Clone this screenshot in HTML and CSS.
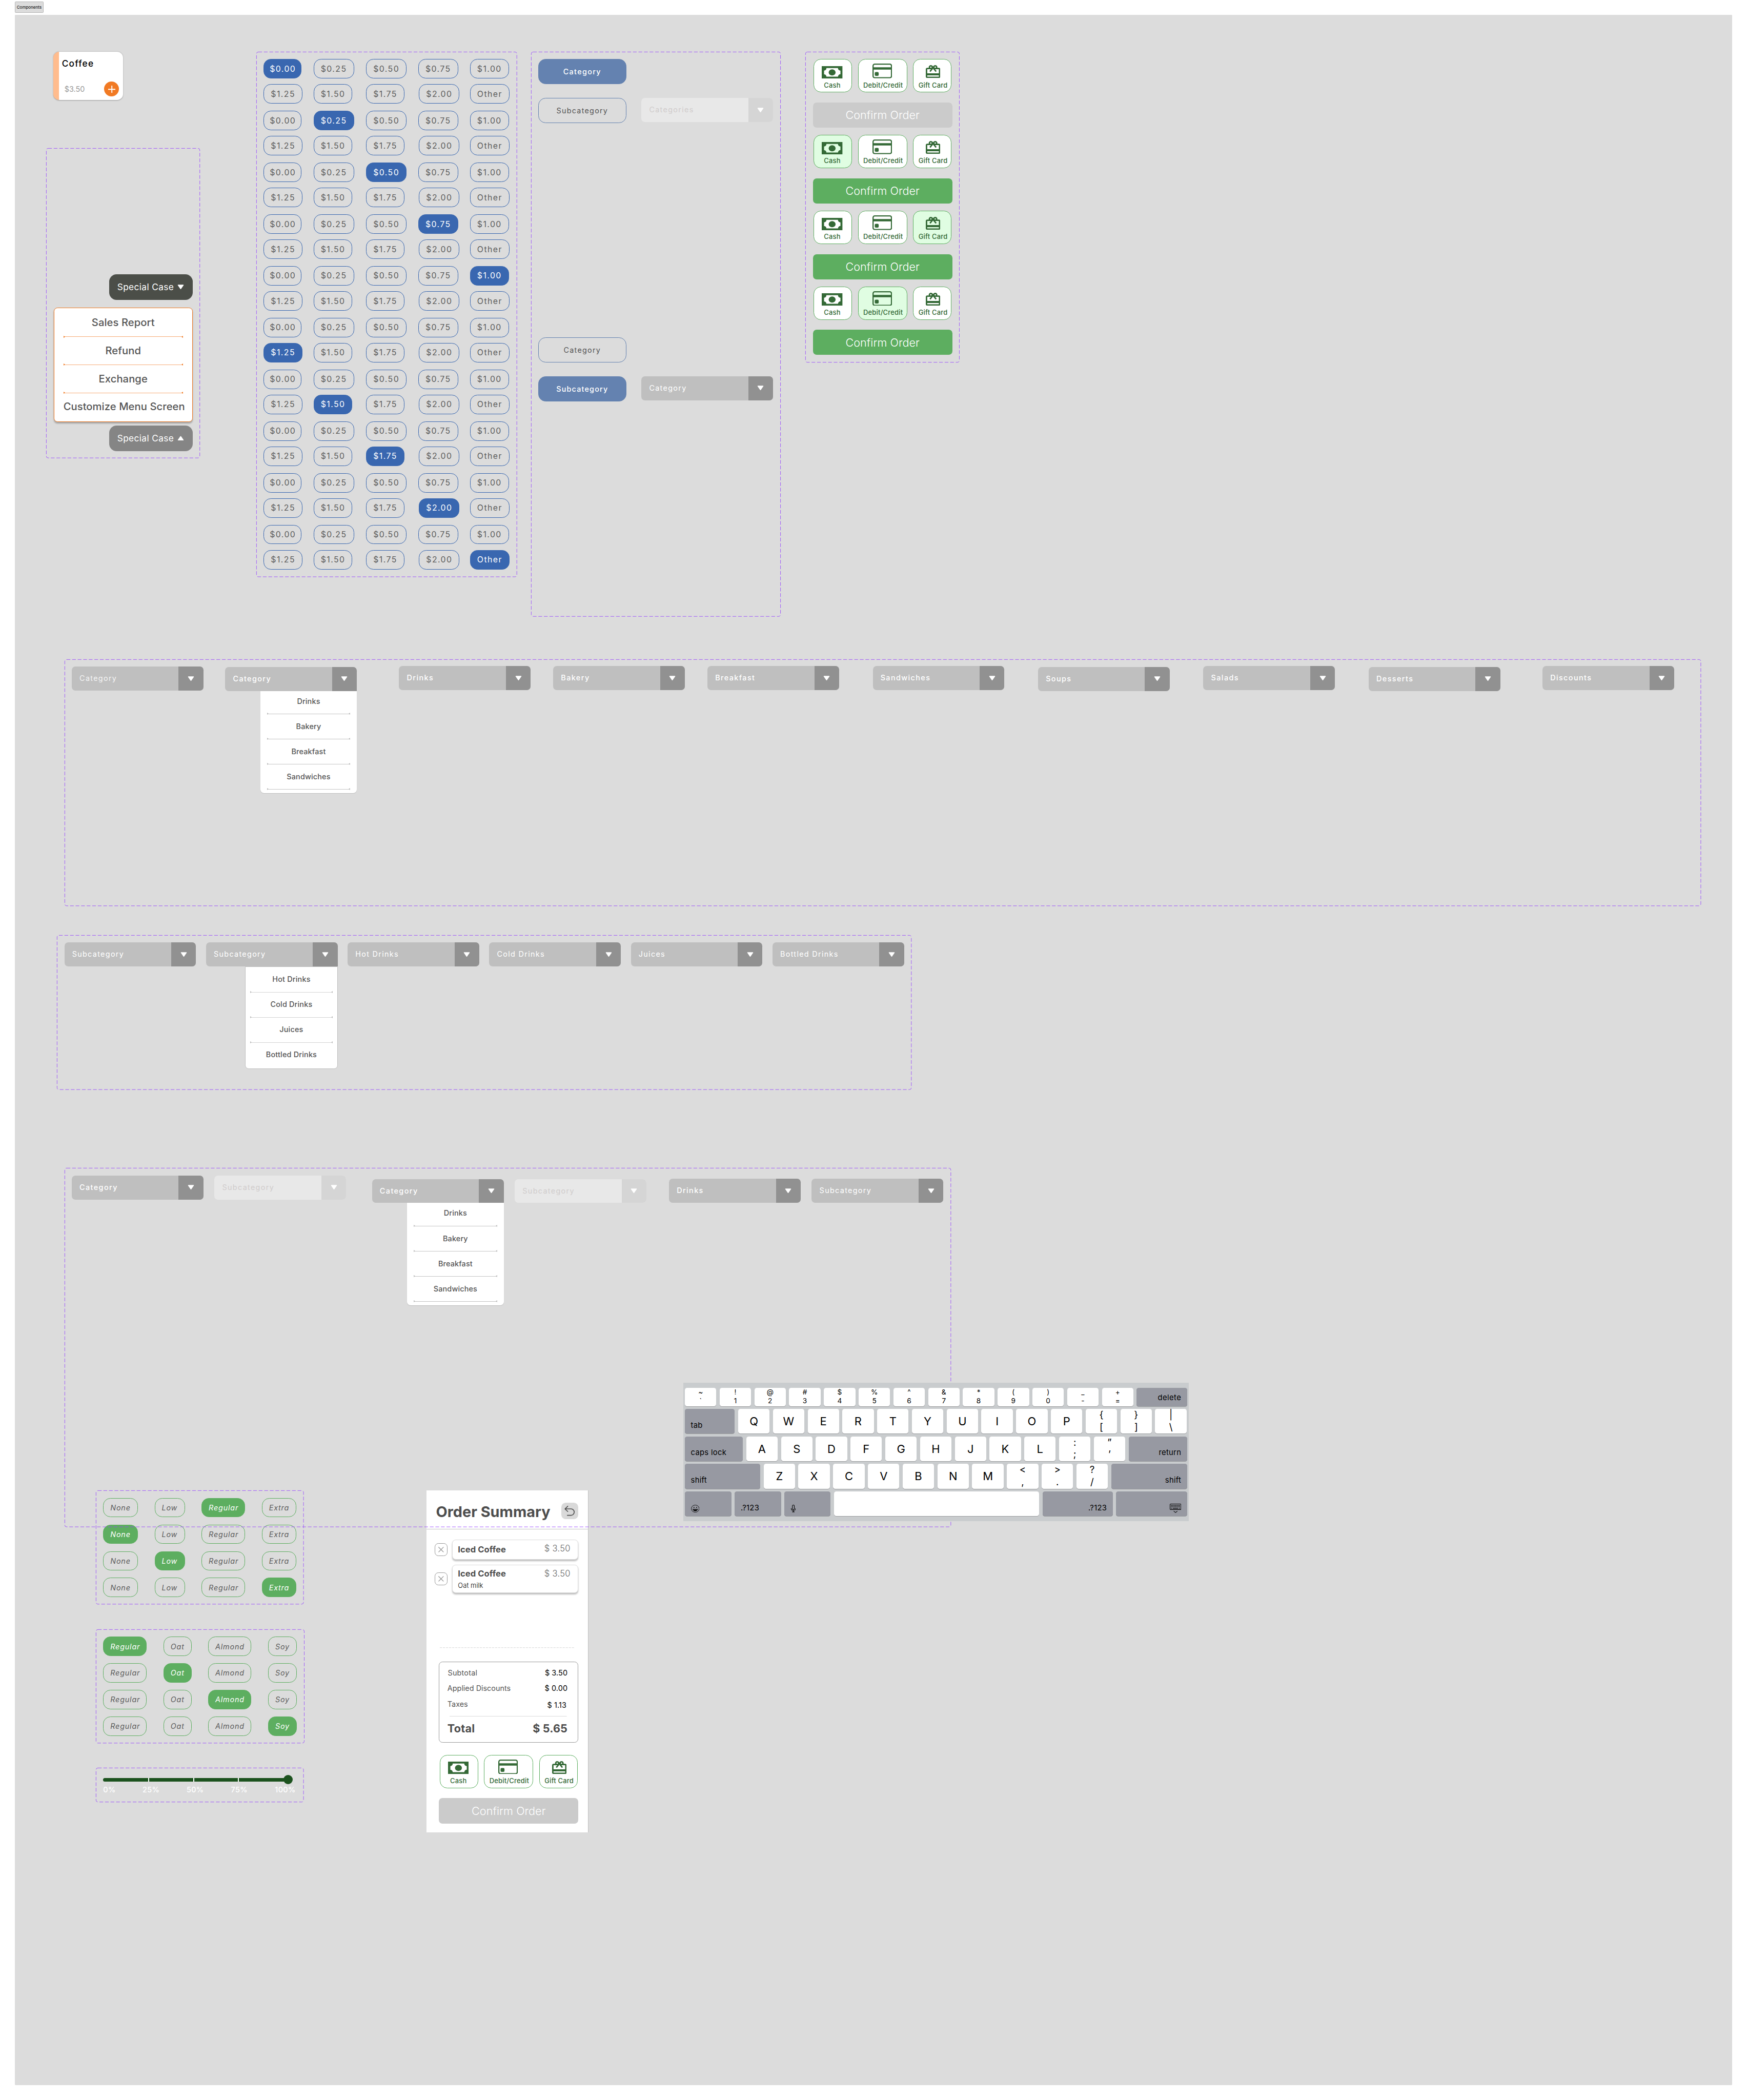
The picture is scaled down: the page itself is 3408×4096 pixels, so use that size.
FILE: index.html
```html
<!DOCTYPE html>
<html lang="en">
<head>
<meta charset="utf-8">
<title>Components</title>
<link rel="stylesheet" href="styles.css">
</head>
<body>
<svg class="defs" aria-hidden="true">
  <symbol id="tri" viewBox="0 0 18 13"><path d="M2 1.5H16L9 11.5Z" fill="currentColor" stroke="currentColor" stroke-width="2" stroke-linejoin="round"/></symbol>
  <symbol id="cash" viewBox="0 0 169 101" preserveAspectRatio="none"><path fill="currentColor" fill-rule="evenodd" d="M0 0H169V101H0ZM38 16A19 19 0 0 1 19 36V66A19 19 0 0 1 38 85H132A19 19 0 0 1 152 66V36A19 19 0 0 1 132 16Z"/><ellipse cx="84.500" cy="50.500" rx="28" ry="25" fill="currentColor"/></symbol>
  <symbol id="credit" viewBox="0 0 53 40"><rect x="1.600" y="1.600" width="49.800" height="36.800" rx="4.500" fill="none" stroke="currentColor" stroke-width="3.200"/><path d="M1 10H52V16.400H1Z" fill="currentColor"/><rect x="6.200" y="23" width="10.600" height="10.400" rx="3" fill="currentColor"/></symbol>
  <symbol id="gift" viewBox="2 2 20 19" preserveAspectRatio="none"><path fill="currentColor" d="M20 6h-2.180c.11-.31.18-.65.18-1 0-1.660-1.340-3-3-3-1.050 0-1.960.54-2.500 1.350l-.5.67-.5-.68C10.960 2.540 10.050 2 9 2 7.340 2 6 3.340 6 5c0 .35.07.69.18 1H4c-1.110 0-1.990.89-1.990 2L2 19c0 1.110.89 2 2 2h16c1.110 0 2-.89 2-2V8c0-1.110-.89-2-2-2zm-5-2c.55 0 1 .45 1 1s-.45 1-1 1-1-.45-1-1 .45-1 1-1zM9 4c.55 0 1 .45 1 1s-.45 1-1 1-1-.45-1-1 .45-1 1-1zm11 15H4v-2h16v2zm0-5H4V8h5.080L7 10.830 8.620 12 11 8.760l1-1.360 1 1.360L15.380 12 17 10.830 14.920 8H20v6z"/></symbol>
  <symbol id="cross" viewBox="0 0 14 14"><path d="M.5 .5L13.500 13.500M13.500 .5L.5 13.500" stroke="currentColor" stroke-width="1.700" fill="none"/></symbol>
  <symbol id="undo" viewBox="0 0 45 45"><path d="M17.500 9.500L10 16.700L17.500 23.900M10.500 16.700H26.200A8.700 8.700 0 0 1 26.200 34.100H16.200" fill="none" stroke="currentColor" stroke-width="2.300" stroke-linecap="round" stroke-linejoin="round"/></symbol>
</svg>

<main class="board">
  <div class="tag">Components</div>
  <section class="canvas">

    <article class="product at-product">
      <div class="product-body">
        <h3>Coffee</h3>
        <div class="product-foot"><span>$3.50</span>
          <button class="add"><svg viewBox="0 0 20 20"><path d="M10 0V20M0 10H20" stroke="#fff" stroke-width="2.600"/></svg></button></div>
      </div>
    </article>

    <div class="set at-special">
      <div class="special">
        <div class="special-btn dark">Special Case<svg><use href="#tri"/></svg></div>
        <ul class="special-menu">
          <li>Sales Report</li><li class="rule"></li><li>Refund</li><li class="rule"></li><li>Exchange</li><li class="rule"></li><li>Customize Menu Screen</li>
        </ul>
        <div class="special-btn">Special Case<svg class="up"><use href="#tri"/></svg></div>
      </div>
      <svg class="outline"><rect/></svg>
    </div>

    <div class="set at-prices">
      <div class="prices-stack">
        <ul class="prices"><li class="on">$0.00</li><li>$0.25</li><li>$0.50</li><li>$0.75</li><li>$1.00</li><li>$1.25</li><li>$1.50</li><li>$1.75</li><li>$2.00</li><li>Other</li></ul>
        <ul class="prices"><li>$0.00</li><li class="on">$0.25</li><li>$0.50</li><li>$0.75</li><li>$1.00</li><li>$1.25</li><li>$1.50</li><li>$1.75</li><li>$2.00</li><li>Other</li></ul>
        <ul class="prices"><li>$0.00</li><li>$0.25</li><li class="on">$0.50</li><li>$0.75</li><li>$1.00</li><li>$1.25</li><li>$1.50</li><li>$1.75</li><li>$2.00</li><li>Other</li></ul>
        <ul class="prices"><li>$0.00</li><li>$0.25</li><li>$0.50</li><li class="on">$0.75</li><li>$1.00</li><li>$1.25</li><li>$1.50</li><li>$1.75</li><li>$2.00</li><li>Other</li></ul>
        <ul class="prices"><li>$0.00</li><li>$0.25</li><li>$0.50</li><li>$0.75</li><li class="on">$1.00</li><li>$1.25</li><li>$1.50</li><li>$1.75</li><li>$2.00</li><li>Other</li></ul>
        <ul class="prices"><li>$0.00</li><li>$0.25</li><li>$0.50</li><li>$0.75</li><li>$1.00</li><li class="on">$1.25</li><li>$1.50</li><li>$1.75</li><li>$2.00</li><li>Other</li></ul>
        <ul class="prices"><li>$0.00</li><li>$0.25</li><li>$0.50</li><li>$0.75</li><li>$1.00</li><li>$1.25</li><li class="on">$1.50</li><li>$1.75</li><li>$2.00</li><li>Other</li></ul>
        <ul class="prices"><li>$0.00</li><li>$0.25</li><li>$0.50</li><li>$0.75</li><li>$1.00</li><li>$1.25</li><li>$1.50</li><li class="on">$1.75</li><li>$2.00</li><li>Other</li></ul>
        <ul class="prices"><li>$0.00</li><li>$0.25</li><li>$0.50</li><li>$0.75</li><li>$1.00</li><li>$1.25</li><li>$1.50</li><li>$1.75</li><li class="on">$2.00</li><li>Other</li></ul>
        <ul class="prices"><li>$0.00</li><li>$0.25</li><li>$0.50</li><li>$0.75</li><li>$1.00</li><li>$1.25</li><li>$1.50</li><li>$1.75</li><li>$2.00</li><li class="on">Other</li></ul>
      </div>
      <svg class="outline"><rect/></svg>
    </div>

    <div class="set at-tabs">
      <div class="tabs">
        <div class="tab on">Category</div><span></span>
        <div class="tab">Subcategory</div>
        <div class="drop off"><span>Categories</span><i><svg><use href="#tri"/></svg></i></div>
      </div>
      <div class="tabs">
        <div class="tab">Category</div><span></span>
        <div class="tab on sub">Subcategory</div>
        <div class="drop"><span>Category</span><i><svg><use href="#tri"/></svg></i></div>
      </div>
      <svg class="outline"><rect/></svg>
    </div>

    <div class="set at-pay">
      <div class="pay-stack">
        <div class="pay">
          <div class="tiles"><div class="tile cash"><svg><use href="#cash"/></svg><span>Cash</span></div><div class="tile credit"><svg><use href="#credit"/></svg><span>Debit/Credit</span></div><div class="tile gift"><svg><use href="#gift"/></svg><span>Gift Card</span></div></div>
          <div class="confirm">Confirm Order</div>
        </div>
        <div class="pay">
          <div class="tiles"><div class="tile cash on"><svg><use href="#cash"/></svg><span>Cash</span></div><div class="tile credit"><svg><use href="#credit"/></svg><span>Debit/Credit</span></div><div class="tile gift"><svg><use href="#gift"/></svg><span>Gift Card</span></div></div>
          <div class="confirm ready">Confirm Order</div>
        </div>
        <div class="pay">
          <div class="tiles"><div class="tile cash"><svg><use href="#cash"/></svg><span>Cash</span></div><div class="tile credit"><svg><use href="#credit"/></svg><span>Debit/Credit</span></div><div class="tile gift on"><svg><use href="#gift"/></svg><span>Gift Card</span></div></div>
          <div class="confirm ready">Confirm Order</div>
        </div>
        <div class="pay">
          <div class="tiles"><div class="tile cash"><svg><use href="#cash"/></svg><span>Cash</span></div><div class="tile credit on"><svg><use href="#credit"/></svg><span>Debit/Credit</span></div><div class="tile gift"><svg><use href="#gift"/></svg><span>Gift Card</span></div></div>
          <div class="confirm ready">Confirm Order</div>
        </div>
      </div>
      <svg class="outline"><rect/></svg>
    </div>

    <div class="set at-categories">
      <div class="drop v1"><span class="dim">Category</span><i><svg><use href="#tri"/></svg></i></div>
      <div class="drop open v2"><span class="med">Category</span><i><svg><use href="#tri"/></svg></i>
        <ul class="menu"><li>Drinks</li><li class="rule"></li><li>Bakery</li><li class="rule"></li><li>Breakfast</li><li class="rule"></li><li>Sandwiches</li><li class="rule"></li></ul></div>
      <div class="drop v3"><span class="med">Drinks</span><i><svg><use href="#tri"/></svg></i></div>
      <div class="drop v4"><span class="med">Bakery</span><i><svg><use href="#tri"/></svg></i></div>
      <div class="drop v5"><span class="med">Breakfast</span><i><svg><use href="#tri"/></svg></i></div>
      <div class="drop v6"><span class="med">Sandwiches</span><i><svg><use href="#tri"/></svg></i></div>
      <div class="drop v7"><span class="med">Soups</span><i><svg><use href="#tri"/></svg></i></div>
      <div class="drop v8"><span class="med">Salads</span><i><svg><use href="#tri"/></svg></i></div>
      <div class="drop v9"><span class="med">Desserts</span><i><svg><use href="#tri"/></svg></i></div>
      <div class="drop v10"><span class="med">Discounts</span><i><svg><use href="#tri"/></svg></i></div>
      <svg class="outline"><rect/></svg>
    </div>

    <div class="set at-subcategories">
      <div class="drop-row">
        <div class="drop"><span>Subcategory</span><i><svg><use href="#tri"/></svg></i></div>
        <div class="drop open"><span>Subcategory</span><i><svg><use href="#tri"/></svg></i>
          <ul class="menu narrow"><li>Hot Drinks</li><li class="rule"></li><li>Cold Drinks</li><li class="rule"></li><li>Juices</li><li class="rule"></li><li>Bottled Drinks</li></ul></div>
        <div class="drop"><span>Hot Drinks</span><i><svg><use href="#tri"/></svg></i></div>
        <div class="drop"><span>Cold Drinks</span><i><svg><use href="#tri"/></svg></i></div>
        <div class="drop"><span>Juices</span><i><svg><use href="#tri"/></svg></i></div>
        <div class="drop"><span>Bottled Drinks</span><i><svg><use href="#tri"/></svg></i></div>
      </div>
      <svg class="outline"><rect/></svg>
    </div>

    <div class="set at-ice">
      <ul class="options ice">
        <li>None</li><li>Low</li><li class="on">Regular</li><li>Extra</li>
        <li class="on">None</li><li>Low</li><li>Regular</li><li>Extra</li>
        <li>None</li><li class="on">Low</li><li>Regular</li><li>Extra</li>
        <li>None</li><li>Low</li><li>Regular</li><li class="on">Extra</li>
      </ul>
      <svg class="outline"><rect/></svg>
    </div>

    <div class="set at-milk">
      <ul class="options milk">
        <li class="on">Regular</li><li>Oat</li><li>Almond</li><li>Soy</li>
        <li>Regular</li><li class="on">Oat</li><li>Almond</li><li>Soy</li>
        <li>Regular</li><li>Oat</li><li class="on">Almond</li><li>Soy</li>
        <li>Regular</li><li>Oat</li><li>Almond</li><li class="on">Soy</li>
      </ul>
      <svg class="outline"><rect/></svg>
    </div>

    <div class="set at-slider">
      <div class="slider">
        <div class="track"><i></i><i></i><i></i><i></i><b class="knob"></b></div>
        <div class="marks"><span>0%</span><span>25%</span><span>50%</span><span>75%</span><span>100%</span></div>
      </div>
      <svg class="outline"><rect/></svg>
    </div>

    <article class="order at-order">
      <header><h2>Order Summary</h2><button class="undo"><svg><use href="#undo"/></svg></button></header>
      <div class="items">
        <div class="item-row"><button class="remove"><svg><use href="#cross"/></svg></button>
          <div class="item single"><div><strong>Iced Coffee</strong></div><span>$ 3.50</span></div></div>
        <div class="item-row"><button class="remove"><svg><use href="#cross"/></svg></button>
          <div class="item"><div><strong>Iced Coffee</strong><small>Oat milk</small></div><span>$ 3.50</span></div></div>
      </div>
      <svg class="perforation"><path d="M0 1H364"/></svg>
      <dl class="totals">
        <div><dt class="first">Subtotal</dt><dd>$ 3.50</dd></div>
        <div><dt>Applied Discounts</dt><dd>$ 0.00</dd></div>
        <div class="tax"><dt>Taxes</dt><dd>$ 1.13</dd></div>
        <div class="grand"><dt>Total</dt><dd>$ 5.65</dd></div>
      </dl>
      <div class="pay">
        <div class="tiles"><div class="tile cash"><svg><use href="#cash"/></svg><span>Cash</span></div><div class="tile credit"><svg><use href="#credit"/></svg><span>Debit/Credit</span></div><div class="tile gift"><svg><use href="#gift"/></svg><span>Gift Card</span></div></div>
        <div class="confirm">Confirm Order</div>
      </div>
    </article>

    <div class="set at-filters">
      <div class="pair p1">
        <div class="drop"><span class="med">Category</span><i><svg><use href="#tri"/></svg></i></div>
        <div class="drop off"><span>Subcategory</span><i><svg><use href="#tri"/></svg></i></div>
      </div>
      <div class="pair p2">
        <div class="drop open"><span class="med">Category</span><i><svg><use href="#tri"/></svg></i>
          <ul class="menu"><li>Drinks</li><li class="rule"></li><li>Bakery</li><li class="rule"></li><li>Breakfast</li><li class="rule"></li><li>Sandwiches</li><li class="rule"></li></ul></div>
        <div class="drop off"><span>Subcategory</span><i><svg><use href="#tri"/></svg></i></div>
      </div>
      <div class="pair p3">
        <div class="drop"><span class="med">Drinks</span><i><svg><use href="#tri"/></svg></i></div>
        <div class="drop"><span>Subcategory</span><i><svg><use href="#tri"/></svg></i></div>
      </div>
      <svg class="outline"><rect/></svg>
    </div>

    <div class="keyboard at-keyboard">
      <div class="keys nums">
        <div class="key two"><span>~</span><span>`</span></div><div class="key two"><span>!</span><span>1</span></div><div class="key two"><span>@</span><span>2</span></div><div class="key two"><span>#</span><span>3</span></div><div class="key two"><span>$</span><span>4</span></div><div class="key two"><span>%</span><span>5</span></div><div class="key two"><span>^</span><span>6</span></div><div class="key two"><span>&amp;</span><span>7</span></div><div class="key two"><span>*</span><span>8</span></div><div class="key two"><span>(</span><span>9</span></div><div class="key two"><span>)</span><span>0</span></div><div class="key two"><span>_</span><span>-</span></div><div class="key two"><span>+</span><span>=</span></div>
        <div class="key mod right grow">delete</div>
      </div>
      <div class="keys">
        <div class="key mod k-tab">tab</div><div class="key">Q</div><div class="key">W</div><div class="key">E</div><div class="key">R</div><div class="key">T</div><div class="key">Y</div><div class="key">U</div><div class="key">I</div><div class="key">O</div><div class="key">P</div><div class="key two"><span>{</span><span>[</span></div><div class="key two"><span>}</span><span>]</span></div><div class="key two"><span>|</span><span>\</span></div>
      </div>
      <div class="keys">
        <div class="key mod k-caps">caps lock</div><div class="key">A</div><div class="key">S</div><div class="key">D</div><div class="key">F</div><div class="key">G</div><div class="key">H</div><div class="key">J</div><div class="key">K</div><div class="key">L</div><div class="key two"><span>:</span><span>;</span></div><div class="key two"><span>”</span><span>’</span></div>
        <div class="key mod right grow">return</div>
      </div>
      <div class="keys">
        <div class="key mod k-shift">shift</div><div class="key">Z</div><div class="key">X</div><div class="key">C</div><div class="key">V</div><div class="key">B</div><div class="key">N</div><div class="key">M</div><div class="key two"><span>&lt;</span><span>,</span></div><div class="key two"><span>&gt;</span><span>.</span></div><div class="key two"><span>?</span><span>/</span></div>
        <div class="key mod right grow">shift</div>
      </div>
      <div class="keys">
        <div class="key mod k-emoji"><svg width="23" height="21" viewBox="0 0 23 21"><ellipse cx="11.500" cy="10.500" rx="10.600" ry="9.700" fill="none" stroke="#000" stroke-width="1.200"/><circle cx="8" cy="7.200" r="1.300"/><circle cx="15" cy="7.200" r="1.300"/><path d="M4.500 11.200H18.500C18 15.500 15 17.300 11.500 17.300S5 15.500 4.500 11.200Z"/><path d="M6 12.600H17" stroke="#9799a2" stroke-width="1"/></svg></div>
        <div class="key mod k-sym">.?123</div>
        <div class="key mod k-mic"><svg width="13" height="20" viewBox="0 0 13 20"><rect x="3.900" y=".7" width="5.200" height="12.600" rx="2.600" fill="none" stroke="#000" stroke-width="1.500"/><path d="M.8 9.500V11A5.700 4.800 0 0 0 12.200 11V9.500M6.500 16V19M3.300 19.200H9.700" fill="none" stroke="#000" stroke-width="1.500"/></svg></div>
        <div class="key grow"></div>
        <div class="key mod right k-sym2">.?123</div>
        <div class="key mod right k-hide"><svg width="31" height="25" viewBox="0 0 31 25"><rect x=".8" y=".8" width="29.400" height="15" rx="1.500" fill="none" stroke="#000" stroke-width="1.500"/><path d="M3.500 4.700H27.500M3.500 8.300H27.500" stroke="#000" stroke-width="2.200" stroke-dasharray="2.200 1.430"/><path d="M3.500 12.300H6M8 12.300H23M25 12.300H27.500" stroke="#000" stroke-width="2"/><path d="M10.500 20L15.500 23.800L20.500 20" fill="none" stroke="#000" stroke-width="1.500"/></svg></div>
      </div>
    </div>
  </section>
</main>
</body>
</html>
```
FILE: styles.css
```css
* { box-sizing: border-box; }
html, body { margin: 0; background: #fff; overflow: hidden; }
body, button { font-family: Inter, "Liberation Sans", sans-serif; }
ul, dl, dd, h2, h3 { margin: 0; padding: 0; list-style: none; }
button { border: 0; padding: 0; background: none; display: block; }
svg { display: block; flex: none; }
.defs { position: absolute; width: 0; height: 0; }

.board { zoom: 0.72142; width: 4724px; height: 5678px; padding: 4px 40px 0; }
.tag { width: 78px; height: 30px; margin-bottom: 6px; display: flex; align-items: center; justify-content: center; border: 1px solid #b4b4b4; border-radius: 2px; background: #dcdcdc; color: #222; font-size: 11px; font-weight: 500; }
.canvas { position: relative; width: 4644px; height: 5597px; background: #dcdcdc; border-radius: 2px; }

/* Free placement of components on the canvas */
.set, .at-product, .at-order, .at-keyboard { position: absolute; }
.at-product { left: 104px; top: 100px; }
.at-special { left: 85px; top: 361px; width: 416px; height: 838px; }
.at-prices { left: 653px; top: 100px; width: 705px; height: 1420px; }
.at-tabs { left: 1395.500px; top: 100px; width: 675px; height: 1527px; }
.at-pay { left: 2138px; top: 100px; width: 417px; height: 840px; }
.at-categories { left: 134px; top: 1742px; width: 4425px; height: 667px; }
.at-subcategories { left: 114px; top: 2488px; width: 2311px; height: 418px; }
.at-filters { left: 134px; top: 3118px; width: 2397px; height: 971px; }
.at-ice { left: 219px; top: 3990px; width: 562px; height: 308px; }
.at-milk { left: 219px; top: 4365px; width: 564px; height: 308px; }
.at-slider { left: 219px; top: 4740px; width: 562px; height: 93px; }
.at-order { left: 1113px; top: 3990px; }
.at-keyboard { left: 1808px; top: 3698px; }

.outline { position: absolute; inset: 0; width: 100%; height: 100%; overflow: visible; }
.outline rect { x: 0.5px; y: 0.5px; width: calc(100% - 1px); height: calc(100% - 1px); rx: 5px; fill: none; stroke: #9747ff; stroke-width: 1.2; stroke-dasharray: 10 5; }

/* Product card */
.product { width: 189px; height: 131px; border-radius: 16px; border-left: 16px solid #ffbc8e; background: #fff; box-shadow: 0 1px 3px rgba(0, 0, 0, .3); }
.product-body { height: 100%; padding: 15px 11px 10px 8px; display: flex; flex-direction: column; justify-content: space-between; }
.product h3 { font-size: 24px; line-height: 32px; font-weight: 500; letter-spacing: .07em; }
.product-foot { display: flex; justify-content: space-between; align-items: center; padding-left: 7px; color: #999; font-size: 20px; }
.add { width: 40px; height: 40px; border-radius: 50%; background: #f17a24; padding: 10px; }
.add svg { width: 20px; height: 20px; }

/* Special case menu */
.special { height: 100%; display: flex; flex-direction: column; justify-content: flex-end; align-items: flex-end; padding: 20px 20px 19px; }
.special-btn { width: 226px; height: 70px; border-radius: 20px; background: #858585; color: #fff; font-size: 24px; letter-spacing: .021em; display: flex; align-items: center; padding: 0 22px; gap: 10px; }
.special-btn.dark { background: #4b4e48; }
.special-btn svg { width: 18px; height: 13px; }
.up { transform: rotate(180deg); }
.special-menu { width: 376px; height: 310px; margin: 20px 0 9px; padding: 2px 25px 0; background: #fff; border: 1px solid #f07a22; border-radius: 10px; box-shadow: 0 4px 4px rgba(0, 0, 0, .25); color: #555; font-size: 28px; font-weight: 450; letter-spacing: .003em; text-align: center; --rule: #f7ac76; --tip: #f07a22; }
.special-menu li:not(.rule) { height: 76px; line-height: 76px; white-space: nowrap; }

.rule { position: relative; height: 1.400px; margin: -.7px 0; background: var(--rule); }
.rule::before, .rule::after { content: ""; position: absolute; top: -2.300px; border: 3px solid transparent; }
.rule::before { left: 0; border-left: 5px solid var(--tip); border-right: 0; }
.rule::after { right: 0; border-right: 5px solid var(--tip); border-left: 0; }

/* Price chips */
.prices-stack { padding: 20px; display: flex; flex-direction: column; gap: 20px; }
.prices { display: grid; grid-template-columns: 135px 142px 141px 140px 107px; grid-auto-rows: 52px; row-gap: 16px; justify-items: start; }
.prices li { display: flex; align-items: center; padding: 0 18px; border: 1px solid #3967b0; border-radius: 20px; color: #5c5c5c; font-size: 22px; letter-spacing: .09em; }
.prices li:nth-child(1) { padding: 0 14px 0 15px; }
.prices li:nth-child(9) { margin-left: 2px; }
.prices .on { background: #3967b0; color: #fff; }

/* Category tabs */
.tabs { display: grid; grid-template-columns: 238px 356px; grid-auto-rows: 68px; gap: 37px 41px; padding: 20px 20px 0; }
.tabs + .tabs { padding-top: 579px; }
.tab { display: flex; align-items: center; justify-content: center; border: 1px solid #6482b0; border-radius: 20px; color: #555; font-size: 20px; letter-spacing: .085em; }
.tab.on { background: #6482b0; color: #fff; font-weight: 450; letter-spacing: .092em; }
.tab.sub { letter-spacing: .08em; }

/* Dropdowns */
.drop { position: relative; width: 356px; height: 65px; display: flex; border-radius: 10px; background: #bfbfbf; color: #fff; font-size: 20px; letter-spacing: .09em; }
.drop > span { flex: 1; display: flex; align-items: center; padding: 0 0 2px 21px; }
.drop > i { width: 67px; border-radius: 0 10px 10px 0; background: #919191; display: flex; align-items: center; justify-content: center; }
.drop > i svg { width: 18px; height: 13px; }
.drop .med { font-weight: 450; letter-spacing: .096em; }
.drop .dim { color: #f4f4f4; }
.drop.open > i { border-bottom-right-radius: 0; }
.drop.off { background: #e8e8e8; color: #d0cccc; }
.drop.off > i { background: #d5d5d5; color: #fff; }
.menu { position: absolute; right: 0; top: 65px; width: 261px; height: 277px; padding: 0 18px; background: #fff; border-radius: 0 0 10px 10px; box-shadow: 0 1px 1px rgba(0, 0, 0, .14); color: #555; font-weight: 450; letter-spacing: .01em; text-align: center; --rule: #c4c4c4; --tip: #bbb; }
.menu li:not(.rule) { height: 68px; line-height: 68px; }
.menu:not(.narrow) li:first-child { height: 62px; line-height: 56px; }
.menu.narrow { width: 250px; padding: 0 12px; border: 1px solid #bfbfbf; box-shadow: none; letter-spacing: .013em; --rule: #d4d4d4; }
.menu.narrow li:not(.rule) { line-height: 66px; }
.v1, .v2, .v3, .v4, .v5, .v6, .v7, .v8, .v9, .v10 { position: absolute; top: 19px; }
.v1 { left: 20px; top: 20px; }
.v2 { left: 435px; top: 21px; }
.v3 { left: 905px; }
.v4 { left: 1322px; }
.v5 { left: 1739px; }
.v6 { left: 2186px; }
.v7 { left: 2633px; top: 21px; }
.v8 { left: 3080px; }
.v9 { left: 3527px; top: 21px; }
.v10 { left: 3997px; }
.drop-row { display: flex; gap: 27px; padding: 20px; }
.pair { position: absolute; display: flex; gap: 30px; }
.p1 { left: 20px; top: 20px; }
.p2 { left: 832px; top: 29.500px; }
.p3 { left: 1635px; top: 29px; }

/* Payment */
.pay-stack { display: flex; flex-direction: column; gap: 20px; padding: 20px; }
.pay { width: 377px; height: 185px; display: flex; flex-direction: column; justify-content: space-between; }
.tiles { display: grid; grid-template-columns: 104px 133px 104px; gap: 16px; padding: 0 2px; height: 90px; }
.tile { display: grid; grid-template-rows: 57px 24px; justify-items: center; align-items: center; border: 1px solid #5dae60; border-radius: 20px; background: #fff; color: #346936; font-size: 18px; line-height: 24px; font-weight: 450; letter-spacing: .015em; }
.tile.on { background: #e0fde2; }
.cash { padding-right: 3px; }
.cash svg { width: 56.300px; height: 33.700px; margin-top: 11px; }
.credit { padding-left: 1px; }
.credit svg { width: 53px; height: 40px; margin-top: 4px; margin-right: 3px; }
.credit span { margin-left: 2px; }
.gift { padding-left: 4px; }
.gift svg { width: 39.300px; height: 35px; margin-top: 8px; }
.gift span { white-space: nowrap; }
.confirm { height: 68px; border-radius: 10px; background: #cbcbcb; color: #fff; font-size: 30px; font-weight: 350; letter-spacing: .002em; display: flex; align-items: center; justify-content: center; }
.confirm.ready { background: #5dae60; }

/* Option chips */
.options { display: grid; grid-auto-rows: 52px; gap: 20px 45px; padding: 20px; }
.ice { grid-template-columns: 94px 82px 118px 93px; }
.milk { grid-template-columns: 118px 76px 117px 78px; }
.options li { display: flex; align-items: center; padding-left: 18px; border: 1px solid #5dae60; border-radius: 20px; color: #5c5c5c; font-size: 20px; font-style: italic; letter-spacing: .055em; }
.options .on { background: #5dae60; color: #fff; }

/* Slider */
.slider { padding: 27px 0 0 20px; }
.track { position: relative; width: 500px; height: 10px; display: grid; grid-template-columns: 122px 118px 118px 1fr; gap: 3px; border-radius: 5px 0 0 5px; background: linear-gradient(90deg, transparent 20px, #fff 20px); }
.track i { background: #1c521e; }
.track i:first-child { border-radius: 5px 0 0 5px; }
.knob { position: absolute; right: -12px; top: -7.500px; width: 25px; height: 25px; border-radius: 50%; background: #1c521e; }
.marks { display: grid; grid-template-columns: 106.500px 119px 120px 119px auto; margin-top: 10px; color: #fff; font-size: 20px; line-height: 24px; font-weight: 550; letter-spacing: .025em; }

/* Order summary */
.order { width: 439px; height: 924px; background: #fff; border-right: 1px solid #c0c0c0; display: flex; flex-direction: column; align-items: flex-start; }
.order header { width: 438px; height: 105px; padding: 7px 28px 0 26px; display: flex; justify-content: space-between; align-items: center; border-bottom: 1px solid #c0c0c0; }
.order h2 { font-size: 40px; font-weight: 700; color: #4d4d4d; padding-top: 3px; white-space: nowrap; }
.undo { width: 45px; height: 45px; border-radius: 12px; background: #d9d9d9; color: #4d4d4d; }
.undo svg { width: 45px; height: 45px; }
.items { height: 319px; padding: 27px 0 0 22px; display: flex; flex-direction: column; gap: 14px; }
.item-row { display: flex; align-items: center; gap: 12px; }
.remove { width: 35px; height: 35px; border: 2px solid #999; border-radius: 10px; color: #999; display: flex; align-items: center; justify-content: center; }
.remove svg { width: 15px; height: 15px; }
.item { width: 341px; height: 76px; padding: 7px 19px 0 15px; display: flex; justify-content: space-between; background: #fff; border: 1px solid #ddd; border-radius: 10px; box-shadow: 0 4px 4px rgba(0, 0, 0, .25); font-size: 23px; line-height: 32px; }
.item.single { height: 55px; }
.item.single strong { padding-top: 3px; }
.item strong, .item small { display: block; }
.item strong { font-weight: 700; color: #4d4d4d; letter-spacing: .003em; }
.item small { font-size: 18px; font-weight: 300; color: #000; letter-spacing: .004em; }
.item span { font-weight: 300; color: #666; letter-spacing: .017em; }
.perforation { width: 364px; height: 2px; margin-left: 37px; }
.perforation path { stroke: #d4d4d4; stroke-width: 1.300; stroke-dasharray: 6 2.300; }
.totals { width: 377px; height: 220px; margin: 36px 0 33px 33px; padding-top: 8px; border: 1px solid #9a9a9a; border-radius: 10px; font-size: 20px; }
.totals div { height: 42px; display: flex; justify-content: space-between; align-items: center; padding: 0 27px 0 22.500px; }
.totals dt { color: #555; }
.totals .first { letter-spacing: .012em; padding-left: 1px; }
.totals dd { letter-spacing: .006em; }
.totals .tax dd { padding: 8px 3px 0 0; }
.totals .grand { height: 67px; margin-top: 12px; padding-top: 1px; font-size: 30px; font-weight: 700; background: linear-gradient(#dadada, #dadada) 29px 0 / 317px 1.400px no-repeat; }
.grand dt, .grand dd { color: #4d4d4d; }
.grand dt { letter-spacing: .009em; }
.order .pay { margin-left: 34px; }

/* Keyboard */
.keyboard { width: 1366px; height: 375px; padding: 14px 4px; background: #c9ccce; display: flex; flex-direction: column; gap: 7.300px; }
.keys { display: flex; gap: 9px; height: 67px; }
.keys.nums { height: 50px; }
.key { width: 85px; display: flex; align-items: center; justify-content: center; background: #fff; border-radius: 6px; box-shadow: 0 1px 0 #898a8d; color: #000; font-size: 30.500px; font-weight: 380; }
.key.two { flex-direction: column; justify-content: flex-start; font-size: 26px; line-height: 33px; }
.nums .key.two { font-size: 19px; line-height: 24.500px; }
.key.mod { align-items: flex-end; justify-content: flex-start; padding: 0 16px 10px; background: #9799a2; font-size: 20.500px; line-height: 24px; letter-spacing: .02em; }
.key.mod.right { justify-content: flex-end; }
.nums .key.mod { align-items: center; padding-bottom: 0; padding-top: 4px; letter-spacing: .03em; }
.key.grow { flex: 1; }
.key.k-tab { width: 135px; }
.key.k-caps { width: 157px; }
.key.k-shift { width: 204px; }
.key.k-emoji { width: 126px; }
.key.k-sym { width: 125px; }
.key.k-mic { width: 125px; padding-left: 18px; }
.key.k-sym2 { width: 190px; }
.key.k-hide { width: 192px; padding-bottom: 9px; }
```
